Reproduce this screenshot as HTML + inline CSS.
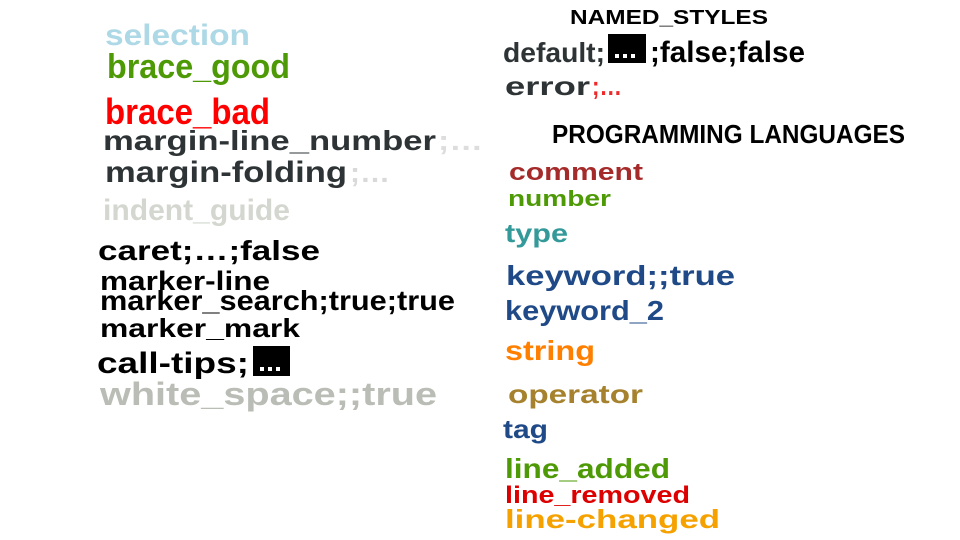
<!DOCTYPE html>
<html><head><meta charset="utf-8"><style>
html,body{margin:0;padding:0;background:#fff;width:960px;height:540px;overflow:hidden}
svg text{font-family:"Liberation Sans",sans-serif;font-weight:bold}
</style></head><body>
<svg width="960" height="540" xmlns="http://www.w3.org/2000/svg">
<text x="105" y="45" font-size="30" fill="#add8e6" textLength="145" lengthAdjust="spacingAndGlyphs">selection</text>
<text x="107" y="78" font-size="34" fill="#4e9a06" textLength="183" lengthAdjust="spacingAndGlyphs">brace_good</text>
<text x="105" y="124" font-size="36" fill="#ff0000" textLength="165" lengthAdjust="spacingAndGlyphs">brace_bad</text>
<text x="103" y="150" font-size="28" fill="#2e3436" textLength="333" lengthAdjust="spacingAndGlyphs">margin-line_number</text>
<text x="438" y="150" font-size="28" fill="#dddddd" textLength="45" lengthAdjust="spacingAndGlyphs">;…</text>
<text x="105" y="182" font-size="30" fill="#2e3436" textLength="242" lengthAdjust="spacingAndGlyphs">margin-folding</text>
<text x="350" y="182" font-size="28" fill="#d9d9d9" textLength="40" lengthAdjust="spacingAndGlyphs">;…</text>
<text x="103" y="220" font-size="30" fill="#d3d7cf" textLength="187" lengthAdjust="spacingAndGlyphs">indent_guide</text>
<text x="98" y="260" font-size="28" fill="#000" textLength="222" lengthAdjust="spacingAndGlyphs">caret;…;false</text>
<text x="100" y="290" font-size="27" fill="#000" textLength="170" lengthAdjust="spacingAndGlyphs">marker-line</text>
<text x="100" y="310" font-size="28" fill="#000" textLength="355" lengthAdjust="spacingAndGlyphs">marker_search;true;true</text>
<text x="100" y="337" font-size="26" fill="#000" textLength="200" lengthAdjust="spacingAndGlyphs">marker_mark</text>
<text x="97" y="373" font-size="30" fill="#000" textLength="152" lengthAdjust="spacingAndGlyphs">call-tips;</text>
<rect x="253" y="346" width="37" height="30" fill="#000"/>
<rect x="260" y="367" width="4" height="4" fill="#fff"/><rect x="268" y="367" width="4" height="4" fill="#fff"/><rect x="276" y="367" width="4" height="4" fill="#fff"/>
<text x="100" y="405" font-size="32" fill="#babdb6" textLength="337" lengthAdjust="spacingAndGlyphs">white_space;;true</text>

<text x="570" y="24" font-size="20" fill="#000" textLength="198" lengthAdjust="spacingAndGlyphs">NAMED_STYLES</text>
<text x="503" y="62" font-size="28" fill="#2e3436" textLength="102" lengthAdjust="spacingAndGlyphs">default;</text>
<rect x="608" y="34" width="38" height="29" fill="#000"/>
<rect x="615" y="54" width="4" height="4" fill="#fff"/><rect x="623" y="54" width="4" height="4" fill="#fff"/><rect x="631" y="54" width="4" height="4" fill="#fff"/>
<text x="650" y="62" font-size="30" fill="#000" textLength="155" lengthAdjust="spacingAndGlyphs">;false;false</text>
<text x="505" y="95" font-size="26" fill="#2e3436" textLength="85" lengthAdjust="spacingAndGlyphs">error</text>
<text x="592" y="95" font-size="26" fill="#ef2929" textLength="30" lengthAdjust="spacingAndGlyphs">;…</text>
<text x="552" y="143" font-size="26" fill="#000" textLength="353" lengthAdjust="spacingAndGlyphs">PROGRAMMING LANGUAGES</text>
<text x="509" y="180" font-size="24" fill="#a52a2a" textLength="134" lengthAdjust="spacingAndGlyphs">comment</text>
<text x="508" y="206" font-size="22" fill="#4e9a06" textLength="103" lengthAdjust="spacingAndGlyphs">number</text>
<text x="505" y="242" font-size="26" fill="#339999" textLength="63" lengthAdjust="spacingAndGlyphs">type</text>
<text x="506" y="285" font-size="28" fill="#204a87" textLength="229" lengthAdjust="spacingAndGlyphs">keyword;;true</text>
<text x="505" y="320" font-size="28" fill="#204a87" textLength="159" lengthAdjust="spacingAndGlyphs">keyword_2</text>
<text x="505" y="360" font-size="28" fill="#ff7f00" textLength="90" lengthAdjust="spacingAndGlyphs">string</text>
<text x="508" y="403" font-size="26" fill="#a6822e" textLength="135" lengthAdjust="spacingAndGlyphs">operator</text>
<text x="503" y="438" font-size="26" fill="#204a87" textLength="45" lengthAdjust="spacingAndGlyphs">tag</text>
<text x="505" y="478" font-size="28" fill="#4e9a06" textLength="165" lengthAdjust="spacingAndGlyphs">line_added</text>
<text x="505" y="503" font-size="24" fill="#dd0000" textLength="185" lengthAdjust="spacingAndGlyphs">line_removed</text>
<text x="505" y="528" font-size="26" fill="#f5a100" textLength="215" lengthAdjust="spacingAndGlyphs">line-changed</text>
</svg>
</body></html>
